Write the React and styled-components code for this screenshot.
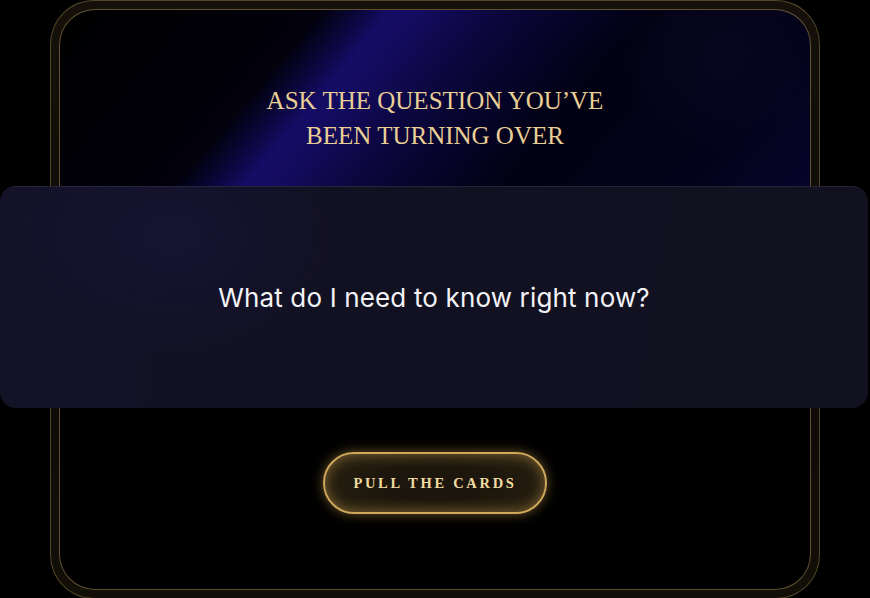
import React from "react";
import styled, { createGlobalStyle } from "styled-components";

const Global = createGlobalStyle`
  html, body { margin: 0; padding: 0; background: #000; }
  body { font-family: "Inter", "Liberation Sans", sans-serif; }
  * { box-sizing: border-box; }
`;

const Page = styled.div`
  width: 870px;
  height: 598px;
  overflow: hidden;
  background: #000;
  display: flex;
  justify-content: center;
`;

const OuterFrame = styled.div`
  width: 770px;
  height: 599px;
  border: 1px solid rgba(110, 92, 54, 0.7);
  border-radius: 44px;
  padding: 8px;
  background: linear-gradient(180deg, #15110a 0%, #0d0a06 50%, #120e08 100%);
`;

const InnerPanel = styled.div`
  height: 100%;
  border: 1px solid rgba(130, 108, 66, 0.75);
  border-radius: 36px;
  display: flex;
  flex-direction: column;
  align-items: center;
  padding-top: 73px;
  background:
    radial-gradient(circle at 88% 20%, rgba(28, 24, 60, 0.22) 0, rgba(18, 14, 44, 0.16) 70px, transparent 100px) top / 100% 200px no-repeat,
    linear-gradient(130deg, #000 0%, #02010c 29%, #0a0638 33%, #150c66 37%, #130b5c 41%, #0c0740 48%, #06042a 56%, #020112 66%, #03021a 85%, #06052a 100%) top / 100% 180px no-repeat,
    #000;
`;

const Heading = styled.h1`
  margin: 0;
  font-family: "Liberation Serif", "DejaVu Serif", serif;
  font-weight: 400;
  font-size: 25px;
  line-height: 35px;
  letter-spacing: 0;
  color: #e9cf95;
  text-align: center;
  text-transform: uppercase;
`;

const QuestionCard = styled.div`
  margin: 33px -58px 0 -60px;
  align-self: stretch;
  height: 222px;
  border-radius: 16px;
  border-top: 1px solid rgba(120, 110, 160, 0.2);
  background:
    radial-gradient(ellipse 240px 170px at 20% 22%, rgba(36, 28, 100, 0.2), transparent 70%),
    linear-gradient(100deg, #131228 0%, #121122 40%, #121120 100%);
  display: flex;
  align-items: center;
  justify-content: center;
`;

const Question = styled.p`
  margin: 0;
  font-family: "Inter", "Liberation Sans", sans-serif;
  font-size: 26px;
  font-weight: 400;
  letter-spacing: 0.15px;
  color: #f3f3f7;
`;

const PullButton = styled.button`
  margin-top: 44px;
  width: 224px;
  height: 62px;
  border-radius: 31px;
  border: 2px solid #d0a85c;
  background: radial-gradient(ellipse at 50% 50%, #1c160c 40%, #2e2412 100%);
  box-shadow:
    0 0 12px rgba(214, 168, 80, 0.5),
    inset 0 0 14px rgba(230, 185, 95, 0.45);
  font-family: "Liberation Serif", "DejaVu Serif", serif;
  font-weight: 700;
  font-size: 14.5px;
  letter-spacing: 2.7px;
  color: #f2dca2;
  text-transform: uppercase;
  cursor: pointer;
`;

export default function App() {
  return (
    <>
      <Global />
      <Page>
        <OuterFrame>
          <InnerPanel>
            <Heading>
              Ask the question you’ve
              <br />
              been turning over
            </Heading>
            <QuestionCard>
              <Question>What do I need to know right now?</Question>
            </QuestionCard>
            <PullButton>Pull the cards</PullButton>
          </InnerPanel>
        </OuterFrame>
      </Page>
    </>
  );
}
